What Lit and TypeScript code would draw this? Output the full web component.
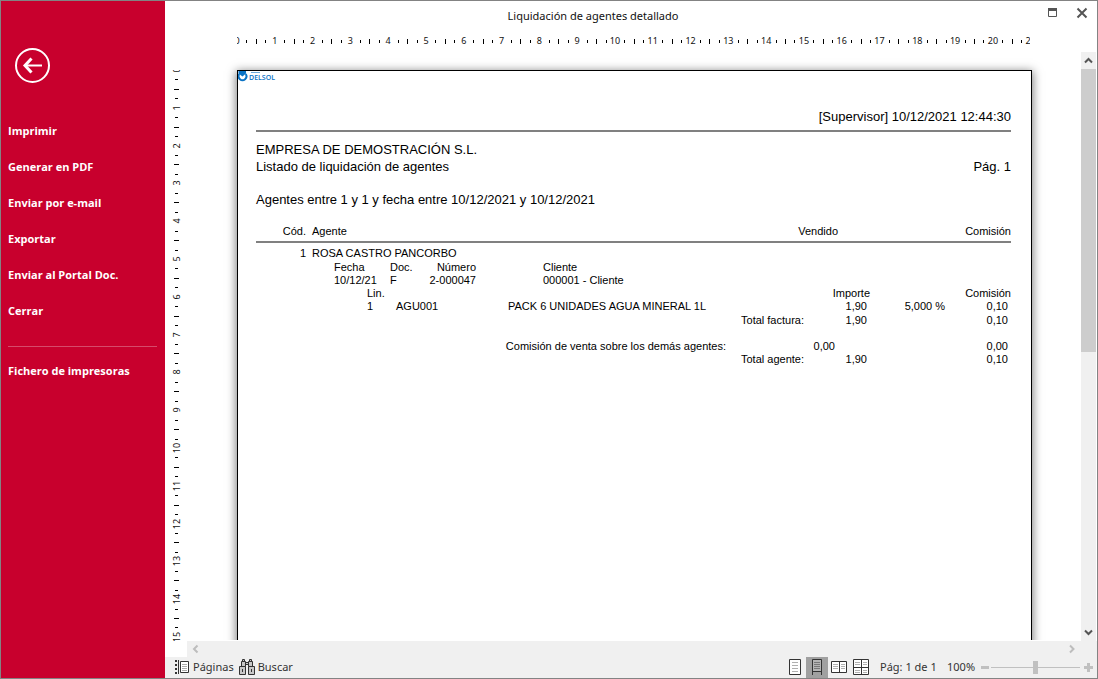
import { LitElement, html, svg, css } from "lit";
import { customElement, property, state } from "lit/decorators.js";

const CM = 96 / 2.54;

@customElement("ruler-scale")
class RulerScale extends LitElement {
  @property({ type: Boolean }) vertical = false;
  @property({ type: Number }) length = 21;

  static styles = css`
    :host {
      display: block;
      overflow: hidden;
    }
    .scale {
      display: block;
      font-family: "Noto Sans", sans-serif;
      font-size: 9px;
      fill: #111;
    }
    .tick {
      fill: #000;
      shape-rendering: crispEdges;
    }
  `;

  private mark(step: number) {
    const exact = (step * CM) / 4;
    const at = Math.round(exact);
    const kind = step % 4;
    if (kind === 0) {
      const n = step / 4;
      return this.vertical
        ? svg`<text transform="translate(15 ${at}) rotate(-90)" text-anchor="middle">${n}</text>`
        : svg`<text x=${exact} y="14" text-anchor="middle">${n}</text>`;
    }
    const size = kind === 2 ? 5 : 3;
    const edge = kind === 2 ? 9 : 10;
    return this.vertical
      ? svg`<rect class="tick" x=${edge} y=${at} width=${size} height="1"></rect>`
      : svg`<rect class="tick" x=${at} y=${edge} width="1" height=${size}></rect>`;
  }

  render() {
    const steps = Array.from({ length: this.length * 4 + 1 }, (_, i) => i);
    const extent = Math.floor(this.length * CM);
    return html`<svg
      class="scale"
      width=${this.vertical ? 22 : extent}
      height=${this.vertical ? extent : 22}
      aria-hidden="true"
    >
      ${steps.map((s) => this.mark(s))}
    </svg>`;
  }
}

@customElement("report-page")
class ReportPage extends LitElement {
  static styles = css`
    :host {
      display: block;
      box-sizing: border-box;
      width: 795px;
      height: 297mm;
      flex: none;
      border: 1px solid #000;
      background: #fff;
      box-shadow: 0 2px 9px 1px rgba(0, 0, 0, 0.5);
      color: #000;
      font-family: "Liberation Sans", Arial, sans-serif;
      font-size: 13px;
      line-height: 17px;
    }
    .logo {
      display: block;
      font-family: "Open Sans", sans-serif;
      font-size: 7px;
      font-weight: 600;
      fill: #0a72c4;
    }
    .body {
      padding: 26px 20px 0 18px;
    }
    .stamp {
      padding-bottom: 5px;
      border-bottom: 2px solid #808080;
      text-align: right;
    }
    .company {
      margin-top: 9px;
    }
    .company,
    .stamp,
    .line,
    .filter {
      white-space: nowrap;
    }
    .line {
      display: flex;
      justify-content: space-between;
    }
    .filter {
      margin: 16px 0 17px;
    }
    table {
      width: 100%;
      table-layout: fixed;
      border-collapse: collapse;
      font-size: 11px;
      line-height: 13px;
    }
    th,
    td {
      padding: 0;
      font-weight: normal;
      text-align: left;
      white-space: nowrap;
    }
    .r {
      text-align: right;
    }
    .num {
      padding-right: 3px;
      text-align: right;
    }
    .agents thead th {
      padding-bottom: 3px;
      border-bottom: 2px solid #808080;
    }
    .agents tbody td {
      padding: 4px 0 1px;
    }
    .agents .name {
      padding-left: 6px;
    }
    .docs {
      margin-left: 78px;
      width: calc(100% - 78px);
    }
    .docs .client {
      padding-left: 67px;
    }
    .lines {
      margin-left: 111px;
      width: calc(100% - 111px);
    }
    .lines tfoot td {
      padding-top: 1px;
    }
    .totals {
      margin-top: 13px;
    }
    .w29 { width: 29px; }
    .w30 { width: 30px; }
    .w32 { width: 32px; }
    .w34 { width: 34px; }
    .w50 { width: 50px; }
    .w56 { width: 56px; }
    .w66 { width: 66px; }
    .w75 { width: 75px; }
    .w78 { width: 78px; }
    .w100 { width: 100px; }
    .w112 { width: 112px; }
    .w141 { width: 141px; }
    .w173 { width: 173px; }
  `;

  render() {
    return html`
      <svg class="logo" width="40" height="11" role="img" aria-label="DELSOL">
        <path d="M0.500 0h7.500v2.500l-3.500 3-4-3z"></path>
        <path d="M1.300 3A3.900 3.900 0 1 0 7.700 3" fill="none" stroke="#0a72c4" stroke-width="2"></path>
        <rect x="13" y="1" width="9" height="1" opacity="0.6"></rect>
        <text x="11" y="9">DELSOL</text>
      </svg>
      <div class="body">
        <div class="stamp">[Supervisor] 10/12/2021 12:44:30</div>
        <div class="company">EMPRESA DE DEMOSTRACIÓN S.L.</div>
        <div class="line"><span>Listado de liquidación de agentes</span><span>Pág. 1</span></div>
        <div class="filter">Agentes entre 1 y 1 y fecha entre 10/12/2021 y 10/12/2021</div>
        <table class="agents">
          <colgroup><col class="w50" /><col /><col class="w100" /><col class="w173" /></colgroup>
          <thead>
            <tr><th class="r">Cód.</th><th class="name">Agente</th><th class="r">Vendido</th><th class="r">Comisión</th></tr>
          </thead>
          <tbody>
            <tr><td class="r">1</td><td class="name">ROSA CASTRO PANCORBO</td><td></td><td></td></tr>
          </tbody>
        </table>
        <table class="docs">
          <colgroup><col class="w56" /><col class="w30" /><col class="w56" /><col /></colgroup>
          <thead>
            <tr><th>Fecha</th><th>Doc.</th><th class="r">Número</th><th class="client">Cliente</th></tr>
          </thead>
          <tbody>
            <tr><td>10/12/21</td><td>F</td><td class="r">2-000047</td><td class="client">000001 - Cliente</td></tr>
          </tbody>
        </table>
        <table class="lines">
          <colgroup><col class="w29" /><col class="w112" /><col /><col class="w66" /><col class="w75" /><col class="w66" /></colgroup>
          <thead>
            <tr><th>Lin.</th><th></th><th></th><th class="r">Importe</th><th></th><th class="r">Comisión</th></tr>
          </thead>
          <tbody>
            <tr><td>1</td><td>AGU001</td><td>PACK 6 UNIDADES AGUA MINERAL 1L</td><td class="num">1,90</td><td class="r">5,000 %</td><td class="num">0,10</td></tr>
          </tbody>
          <tfoot>
            <tr><td class="r" colspan="3">Total factura:</td><td class="num">1,90</td><td></td><td class="num">0,10</td></tr>
          </tfoot>
        </table>
        <table class="totals">
          <colgroup><col /><col class="w78" /><col class="w34" /><col class="w32" /><col class="w141" /></colgroup>
          <tbody>
            <tr><td class="r">Comisión de venta sobre los demás agentes:</td><td class="num" colspan="2">0,00</td><td></td><td class="num">0,00</td></tr>
            <tr><td class="r" colspan="2">Total agente:</td><td class="num" colspan="2">1,90</td><td class="num">0,10</td></tr>
          </tbody>
        </table>
      </div>
    `;
  }
}

const ACTIONS = ["Imprimir", "Generar en PDF", "Enviar por e-mail", "Exportar", "Enviar al Portal Doc.", "Cerrar"];

const VIEWS = [
  {
    id: "single",
    label: "Página completa",
    icon: svg`<path d="M5.500 2.500h11v15h-11z" fill="#fff" stroke="#333"/><path d="M8 5.500h6M8 8.500h6M8 11.500h6M8 14.500h6" stroke="#b0b0b0"/>`,
  },
  {
    id: "width",
    label: "Ancho de página",
    icon: svg`<path d="M7 2h8v12H7z" fill="#b4b4b4"/><path d="M8 5.500h6M8 7.500h6M8 9.500h6M8 11.500h6" stroke="#777"/><path d="M6.500 18V2.500h9V18M6.500 14.500h9" fill="none" stroke="#333"/>`,
  },
  {
    id: "double",
    label: "Dos páginas",
    icon: svg`<path d="M3.500 4.500h15v11h-15zM11.500 4.500v11" fill="#fff" stroke="#333"/><path d="M5 7.500h5M5 9.500h5M5 11.500h5M13 7.500h4M13 9.500h4M13 11.500h4" stroke="#b0b0b0"/>`,
  },
  {
    id: "grid",
    label: "Varias páginas",
    icon: svg`<path d="M3.500 2.500h15v15h-15zM11.500 2.500v15M3.500 10.500h15" fill="#fff" stroke="#333"/><path d="M5 5.500h5M5 7.500h5M13 5.500h4M13 7.500h4M5 13.500h5M5 15.500h5M13 13.500h4M13 15.500h4" stroke="#b0b0b0"/>`,
  },
];

@customElement("app-root")
class AppRoot extends LitElement {
  @state() private view = "width";

  static styles = css`
    :host {
      display: grid;
      grid-template-columns: 164px minmax(0, 1fr);
      grid-template-rows: minmax(0, 1fr);
      box-sizing: border-box;
      height: 100vh;
      border: 1px solid #838383;
      background: #fff;
      overflow: hidden;
      font-family: "Noto Sans", "Open Sans", sans-serif;
      font-size: 11px;
      color: #333;
    }
    button {
      margin: 0;
      padding: 0;
      border: 0;
      background: none;
      font: inherit;
      color: inherit;
    }
    svg {
      display: block;
    }
    .side {
      padding: 47px 8px 0 7px;
      background: #c8002d;
      color: #fff;
    }
    .back {
      display: block;
      margin: 0 0 28px 7px;
    }
    .item {
      display: block;
      width: 100%;
      height: 36px;
      font-family: "Open Sans", sans-serif;
      font-size: 11px;
      font-weight: 700;
      text-align: left;
      white-space: nowrap;
    }
    .rule {
      height: 1px;
      margin: 18px 0 5px;
      border: 0;
      background: #d64a6a;
    }
    .main {
      display: grid;
      grid-template-rows: 29px 22px minmax(0, 1fr) 16px 21px;
      min-width: 0;
    }
    .title {
      display: grid;
      grid-template-columns: minmax(0, 1fr) 76px;
      align-items: center;
    }
    .title h1 {
      margin: 0;
      font-size: 11px;
      font-weight: 400;
      text-align: center;
      color: #111;
    }
    .window {
      display: flex;
      justify-content: flex-end;
      gap: 15px;
      padding: 0 8px 6px 0;
    }
    .top-ruler {
      display: flex;
      justify-content: center;
      padding: 0 17px 0 22px;
    }
    .work {
      display: grid;
      grid-template-columns: 22px minmax(0, 1fr) 15px;
      grid-template-rows: minmax(0, 1fr);
      padding-right: 1px;
      min-height: 0;
    }
    .left-ruler {
      padding-top: 18px;
      overflow: hidden;
    }
    .canvas {
      display: flex;
      justify-content: center;
      margin-bottom: 1px;
      padding: 18px 0 0 1px;
      overflow: hidden;
    }
    .vbar {
      display: grid;
      grid-template-rows: 17px minmax(0, 1fr) 17px;
      background: #f0f0f0;
    }
    .thumb {
      height: 51%;
      background: #cdcdcd;
    }
    .hbar {
      display: flex;
      justify-content: space-between;
      margin-left: 22px;
      padding-right: 17px;
      background: #f0f0f0;
    }
    .status {
      display: flex;
      align-items: center;
      padding-left: 9px;
      background: #f0f0f0;
      white-space: nowrap;
    }
    .tool {
      display: flex;
      align-items: center;
      gap: 3px;
      margin-right: 5px;
    }
    .tool,
    .pages,
    .percent {
      padding-bottom: 2px;
    }
    .views {
      display: flex;
      margin-left: auto;
    }
    .view[aria-pressed="true"] {
      background: #a0a0a0;
    }
    .pages {
      width: 60px;
      margin-left: 8px;
    }
    .percent {
      width: 27px;
      margin-right: 7px;
      margin-left: 7px;
    }
    .zoom {
      appearance: none;
      width: 89px;
      height: 14px;
      margin: 0 4px 0 2px;
      background: linear-gradient(#c0c0c0, #c0c0c0) center / 100% 1px no-repeat;
    }
    .zoom::-webkit-slider-thumb {
      appearance: none;
      width: 5px;
      height: 13px;
      background: #c0c0c0;
    }
    .plus {
      margin-right: 4px;
    }
  `;

  render() {
    return html`
      <nav class="side">
        <button class="back" aria-label="Volver">
          <svg width="36" height="36" viewBox="0 0 36 36" fill="none" stroke="#fff">
            <circle cx="17.500" cy="17.500" r="16.500" stroke-width="2"></circle>
            <path d="M10 17.500h17" stroke-width="2"></path>
            <path d="M16.500 10.500l-6.500 7 6.500 7" stroke-width="3"></path>
          </svg>
        </button>
        ${ACTIONS.map((a) => html`<button class="item">${a}</button>`)}
        <hr class="rule" />
        <button class="item">Fichero de impresoras</button>
      </nav>
      <main class="main">
        <header class="title">
          <h1>Liquidación de agentes detallado</h1>
          <div class="window">
            <button aria-label="Maximizar">
              <svg width="14" height="14" fill="none" stroke="#555"><path d="M2.500 3v7.500h8V3"></path><path d="M2 3.500h9" stroke-width="3"></path></svg>
            </button>
            <button aria-label="Cerrar ventana">
              <svg width="14" height="14" fill="none" stroke="#555" stroke-width="2"><path d="M2.500 2.500l9 9M11.500 2.500l-9 9"></path></svg>
            </button>
          </div>
        </header>
        <div class="top-ruler"><ruler-scale .length=${21}></ruler-scale></div>
        <div class="work">
          <div class="left-ruler"><ruler-scale vertical .length=${29}></ruler-scale></div>
          <div class="canvas"><report-page></report-page></div>
          <div class="vbar">
            <button aria-label="Subir"><svg width="15" height="17" fill="none" stroke="#555" stroke-width="2"><path d="M4 10.500l3.500-3.500 3.500 3.500"></path></svg></button>
            <div><div class="thumb"></div></div>
            <button aria-label="Bajar"><svg width="15" height="17" fill="none" stroke="#555" stroke-width="2"><path d="M4 6.500l3.500 3.500 3.500-3.500"></path></svg></button>
          </div>
        </div>
        <div class="hbar">
          <button aria-label="Izquierda"><svg width="17" height="16" fill="none" stroke="#bdbdbd" stroke-width="2"><path d="M10.500 4.500l-3.500 3.500 3.500 3.500"></path></svg></button>
          <button aria-label="Derecha"><svg width="17" height="16" fill="none" stroke="#bdbdbd" stroke-width="2"><path d="M7 4.500l3.500 3.500-3.500 3.500"></path></svg></button>
        </div>
        <footer class="status">
          <button class="tool">
            <svg width="16" height="16" fill="none" stroke="#333">
              <path d="M2 1v14" stroke-width="2" stroke-dasharray="2 2"></path>
              <path d="M4.500 1v14"></path>
              <path d="M6.500 2.500h8v11h-8z" fill="#fff"></path>
              <path d="M8 5.500h5M8 7.500h5M8 9.500h5M8 11.500h5" stroke="#aaa"></path>
            </svg>
            Páginas
          </button>
          <button class="tool">
            <svg width="16" height="16" fill="#c8c8c8" stroke="#333">
              <path d="M3.500 0.500h2v2h-2zM10.500 0.500h2v2h-2zM2.500 2.500h4v5h-4zM9.500 2.500h4v5h-4zM6.500 3.500h3v2h-3z"></path>
              <path d="M0.500 7.500h6v8h-6zM9.500 7.500h6v8h-6z"></path>
              <path d="M3.500 10v3M12.500 10v3"></path>
            </svg>
            Buscar
          </button>
          <div class="views">
            ${VIEWS.map(
              (v) => html`<button
                class="view"
                aria-label=${v.label}
                aria-pressed=${this.view === v.id}
                @click=${() => (this.view = v.id)}
              ><svg width="22" height="21">${v.icon}</svg></button>`
            )}
          </div>
          <span class="pages">Pág: 1 de 1</span>
          <label class="percent" for="zoom">100%</label>
          <button aria-label="Alejar"><svg width="8" height="9" fill="#c0c0c0"><path d="M0 3h8v3H0z"></path></svg></button>
          <input class="zoom" id="zoom" type="range" min="0" max="200" value="100" />
          <button class="plus" aria-label="Acercar"><svg width="9" height="9" fill="#c0c0c0"><path d="M0 3h3V0h3v3h3v3H6v3H3V6H0z"></path></svg></button>
        </footer>
      </main>
    `;
  }
}
